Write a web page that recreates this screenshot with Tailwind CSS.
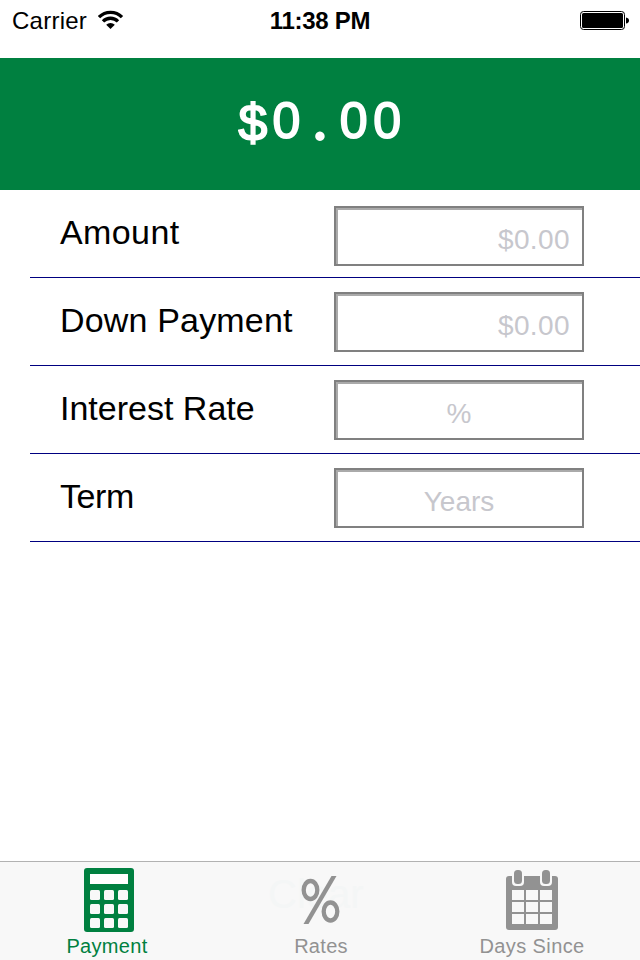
<!DOCTYPE html>
<html lang="en">
<head>
<meta charset="utf-8">
<title>Payment</title>
<script src="https://cdn.jsdelivr.net/npm/@tailwindcss/browser@4"></script>
</head>
<body class="bg-white font-['Liberation_Sans',Arial,sans-serif] text-black">
<div class="flex h-[960px] w-[640px] flex-col overflow-hidden">
  <header class="grid h-[58px] shrink-0 grid-cols-3 items-start px-3 pt-[7px] text-2xl leading-[28px]">
    <div class="flex items-start">
      <span class="tracking-[0.25px]">Carrier</span>
      <svg class="mt-[3px] ml-[11px]" width="26" height="20" viewBox="98 10 26 20" fill="none" stroke="#000" stroke-width="3.300">
        <path d="M99 17.200a16 16 0 0 1 23 0"/>
        <path d="M103 21.400a10.500 10.500 0 0 1 15 0"/>
        <path d="M110.500 29l-4.300-4.300a6.300 6.300 0 0 1 8.600 0z" fill="#000" stroke="none"/>
      </svg>
    </div>
    <div class="text-center font-bold tracking-[-0.3px] whitespace-nowrap">11:38 PM</div>
    <svg class="mt-[4px] -mr-[2px] justify-self-end" width="50" height="20" viewBox="0 0 50 20">
      <rect x=".5" y=".5" width="44" height="18" rx="3" fill="#fff" stroke="#000"/>
      <rect x="2" y="2" width="41" height="15" rx="1.500" fill="#000"/>
      <path d="M46 6.500q3 .5 3 3t-3 3z" fill="#000"/>
    </svg>
  </header>

  <section class="flex h-[132px] shrink-0 justify-center bg-[#008040] pt-[32px] text-[50px] leading-[62px] text-white [-webkit-text-stroke:1.8px_white]"><span class="w-[33.6px] pt-[6px] text-center font-['Liberation_Mono',monospace] text-[52px]">$</span><span class="w-[33.6px] text-center">0</span><span class="w-[33.6px] text-center font-['Lato',sans-serif] font-bold">.</span><span class="w-[33.6px] text-center">0</span><span class="w-[33.6px] text-center">0</span></section>

  <main class="flex-1 pl-[30px] text-[34px] leading-[40px]">
    <div class="flex h-[88px] items-start border-b border-[#000080] pl-[30px]">
      <label class="w-[274px] pt-[22px] tracking-[0.4px]">Amount</label>
      <div class="mt-4 h-[60px] w-[250px] border-2 border-[#808080] pt-[14px] pr-[12px] text-right text-[28px] leading-[36px] tracking-[0.4px] text-[#c7c7cd] shadow-[inset_2px_2px_0_#aaaaaa]">$0.00</div>
    </div>
    <div class="flex h-[88px] items-start border-b border-[#000080] pl-[30px]">
      <label class="w-[274px] pt-[22px] tracking-[0.17px]">Down Payment</label>
      <div class="mt-[14px] h-[60px] w-[250px] border-2 border-[#808080] pt-[14px] pr-[12px] text-right text-[28px] leading-[36px] tracking-[0.4px] text-[#c7c7cd] shadow-[inset_2px_2px_0_#aaaaaa]">$0.00</div>
    </div>
    <div class="flex h-[88px] items-start border-b border-[#000080] pl-[30px]">
      <label class="w-[274px] pt-[22px]">Interest Rate</label>
      <div class="mt-[14px] h-[60px] w-[250px] border-2 border-[#808080] pt-[14px] text-center text-[28px] leading-[36px] text-[#c7c7cd] shadow-[inset_2px_2px_0_#aaaaaa]">%</div>
    </div>
    <div class="flex h-[88px] items-start border-b border-[#000080] pl-[30px]">
      <label class="w-[274px] pt-[22px] tracking-[-0.4px]">Term</label>
      <div class="mt-[14px] h-[60px] w-[250px] border-2 border-[#808080] pt-[14px] text-center text-[28px] leading-[36px] text-[#c7c7cd] shadow-[inset_2px_2px_0_#aaaaaa]">Years</div>
    </div>
  </main>

  <nav class="relative grid h-[99px] shrink-0 grid-cols-[214px_212px_214px] border-t border-[#b2b2b2] bg-[#f8f8f8] text-xl leading-6 text-[#929292]">
    <span class="absolute top-[8px] left-[268px] text-[40px] leading-[48px] text-[#f4f6f6]" aria-hidden="true">Clear</span>
    <div class="relative flex flex-col items-center pt-[6px] text-[#008040]">
      <svg class="ml-1" width="50" height="64" viewBox="0 0 50 64">
        <rect width="50" height="64" rx="3" fill="#008040"/>
        <g fill="#f8f8f8"><rect x="6" y="6" width="38" height="10" fill="#fff"/>
        <rect x="6" y="22" width="10" height="10" rx="1.500"/><rect x="20" y="22" width="10" height="10" rx="1.500"/><rect x="34" y="22" width="10" height="10" rx="1.500"/>
        <rect x="6" y="36" width="10" height="10" rx="1.500"/><rect x="20" y="36" width="10" height="10" rx="1.500"/><rect x="34" y="36" width="10" height="10" rx="1.500"/>
        <rect x="6" y="50" width="10" height="10" rx="1.500"/><rect x="20" y="50" width="10" height="10" rx="1.500"/><rect x="34" y="50" width="10" height="10" rx="1.500"/></g>
      </svg>
      <span class="mt-[2px] tracking-[0.3px]">Payment</span>
    </div>
    <div class="relative flex flex-col items-center pt-[6px]">
      <svg class="ml-[2px]" width="50" height="64" viewBox="296 868 50 64" fill="none" stroke="#929292" stroke-width="4.300">
        <ellipse cx="310.500" cy="890" rx="6.800" ry="9"/>
        <ellipse cx="330.500" cy="911.500" rx="6.800" ry="9"/>
        <path d="M331.500 876h5L308.500 924h-5z" fill="#929292" stroke="none"/>
      </svg>
      <span class="mt-[2px] ml-[2px] tracking-[0.3px]">Rates</span>
    </div>
    <div class="relative flex flex-col items-center pt-[6px]">
      <svg class="mr-[2px]" width="52" height="64" viewBox="506 868 52 64">
        <rect x="506" y="876" width="52" height="54" rx="3" fill="#929292"/>
        <g fill="#f8f8f8"><rect x="512" y="868" width="12" height="18" rx="4"/><rect x="540" y="868" width="12" height="18" rx="4"/>
        <rect x="512" y="890" width="12" height="10"/><rect x="526" y="890" width="12" height="10"/><rect x="540" y="890" width="12" height="10"/>
        <rect x="512" y="902" width="12" height="10"/><rect x="526" y="902" width="12" height="10"/><rect x="540" y="902" width="12" height="10"/>
        <rect x="512" y="914" width="12" height="10"/><rect x="526" y="914" width="12" height="10"/><rect x="540" y="914" width="12" height="10"/></g>
        <g fill="#929292"><rect x="514" y="870" width="8" height="14" rx="3.500"/><rect x="542" y="870" width="8" height="14" rx="3.500"/></g>
      </svg>
      <span class="mt-[2px] mr-[2px] tracking-[0.4px]">Days Since</span>
    </div>
  </nav>
</div>
</body>
</html>
